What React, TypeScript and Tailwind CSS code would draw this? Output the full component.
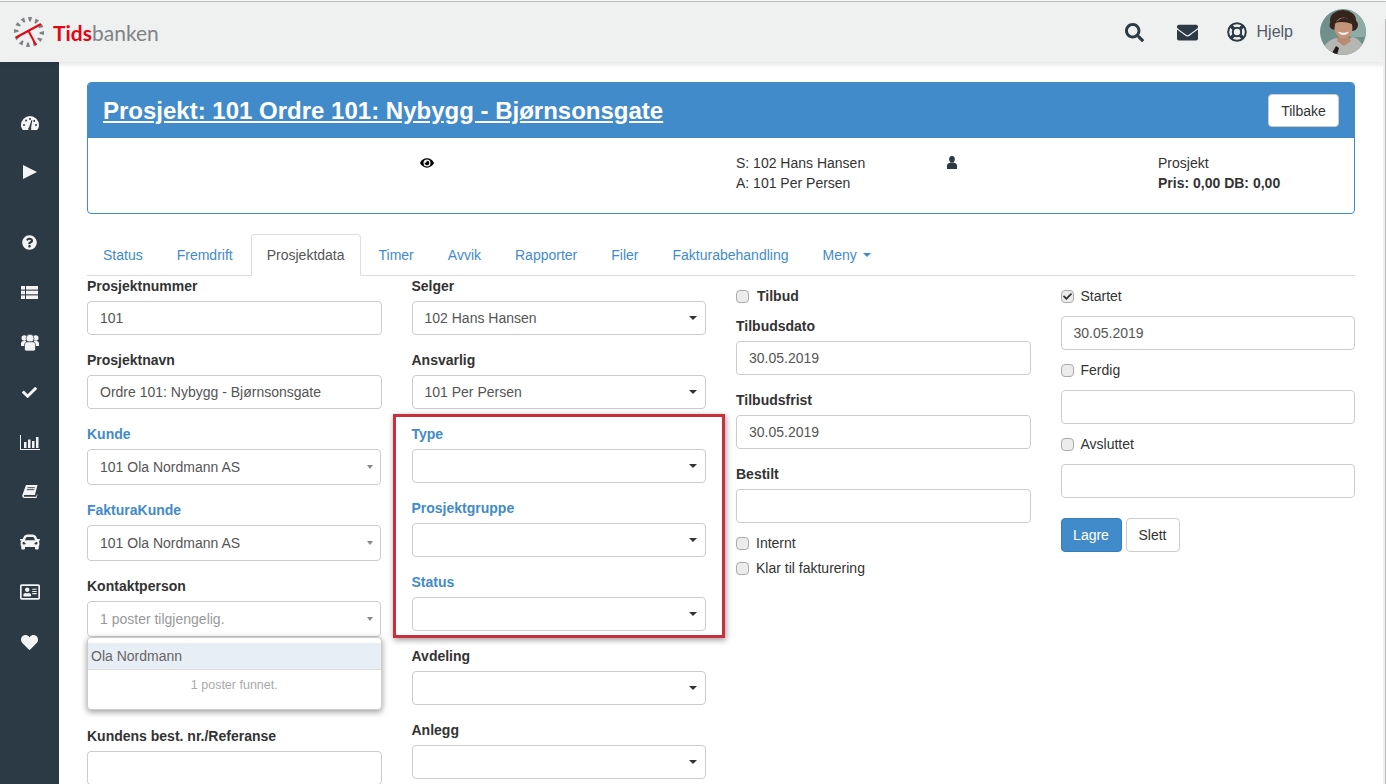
import type { ReactNode } from "react";
import {
  FaCar,
  FaCheck,
  FaEnvelope,
  FaEye,
  FaHeart,
  FaQuestionCircle,
  FaRegAddressCard,
  FaSearch,
} from "react-icons/fa";

const Logo = () => {
  const ticks = [0, 30, 60, 90, 120, 150, 180, 210, 240, 270, 300, 330];
  return (
    <svg width="32" height="32" viewBox="0 0 32 32" className="shrink-0">
      {ticks.map((a) => (
        <path key={a} d="M14 1h4l-1.2 4.5h-1.6z" fill="#808285" transform={`rotate(${a} 15 16)`} />
      ))}
      <path d="M2 21.5 27 8" stroke="#e30613" strokeWidth="2" />
      <path d="M14.5 15 22 29" stroke="#e30613" strokeWidth="2" />
    </svg>
  );
};

const Avatar = () => (
  <svg width="46" height="46" viewBox="0 0 46 46" className="rounded-full">
    <rect width="46" height="46" fill="#6f8f8b" />
    <rect x="30" width="16" height="28" fill="#8fabA6" />
    <path d="M2 46c0-9 6-15 14-17l8 3 9-4c7 2 11 8 12 18z" fill="#b5b5b2" />
    <path d="M11 46l5-9 3 2-2 7z" fill="#1f1b1c" />
    <ellipse cx="23" cy="11" rx="13" ry="10" fill="#35231d" />
    <circle cx="32" cy="16" r="6" fill="#35231d" />
    <circle cx="14" cy="16" r="4.500" fill="#35231d" />
    <path d="M19 27h9l3 5-7 5-7-5z" fill="#b98a72" />
    <ellipse cx="23.500" cy="19" rx="9" ry="10.500" fill="#c49479" />
    <path d="M15 14c3-3 6-5 9-5 4 0 7 2 8 6-5-2-11-3-17-1z" fill="#35231d" />
    <path d="M18 22.500c3 1.500 8 1.500 11 0-1 4.500-10 4.500-11 0z" fill="#f5ece7" />
  </svg>
);

const LifeRing = () => (
  <svg width="20" height="20" viewBox="0 0 20 20" fill="none" stroke="#2c3a45">
    <circle cx="10" cy="10" r="8.800" strokeWidth="2" />
    <circle cx="10" cy="10" r="4.200" strokeWidth="2" />
    <path d="M3.800 3.800 7 7M16.200 3.800 13 7M3.800 16.200 7 13M16.200 16.200 13 13" strokeWidth="3.400" />
  </svg>
);

const Gauge = () => (
  <svg width="18" height="14" viewBox="0 0 18 14">
    <path d="M2 14C.7 12.600 0 10.900 0 9a9 9 0 0 1 18 0c0 1.900-.7 3.600-2 5z" fill="#f4f4f4" />
    <g fill="#2c3a45">
      <circle cx="3" cy="9" r="1" />
      <circle cx="5" cy="4.500" r="1" />
      <circle cx="9" cy="3" r="1" />
      <circle cx="15" cy="9" r="1" />
      <circle cx="13.200" cy="5" r="1" />
      <path d="M8 11.500 10.500 4l.8.3L10 12a1.500 1.500 0 1 1-2-.5z" />
    </g>
  </svg>
);

const Play = () => (
  <svg width="14" height="14" viewBox="0 0 14 14" fill="#f4f4f4">
    <path d="M0 0 14 7 0 14z" />
  </svg>
);

const ThList = () => (
  <svg width="17" height="13" viewBox="0 0 17 13" fill="#f4f4f4">
    {[0, 4.700, 9.400].map((y) => (
      <g key={y}>
        <rect y={y} width="4" height="3.600" />
        <rect x="5" y={y} width="12" height="3.600" />
      </g>
    ))}
  </svg>
);

const Users = () => (
  <svg width="18" height="17" viewBox="0 0 18 17" fill="#f4f4f4">
    <circle cx="3.300" cy="4" r="2.800" />
    <circle cx="14.700" cy="4" r="2.800" />
    <path d="M0 12V9.500C0 8 1 7 2.500 7H5v5zM18 12V9.500C18 8 17 7 15.500 7H13v5z" />
    <circle cx="9" cy="4.300" r="4" stroke="#2c3a45" strokeWidth="0.7" />
    <path d="M3.500 15V11c0-2 1.500-3.200 3-3.200h5c1.500 0 3 1.200 3 3.200v4c0 1-.8 2-2 2h-7c-1.200 0-2-1-2-2z" stroke="#2c3a45" strokeWidth="0.7" />
  </svg>
);

const Bars = () => (
  <svg width="20" height="15" viewBox="0 0 20 15" fill="#f4f4f4">
    <rect width="1" height="15" />
    <rect y="14" width="20" height="1" />
    <rect x="4" y="7" width="2.500" height="6" />
    <rect x="8" y="4.500" width="2.500" height="8.500" />
    <rect x="12" y="6" width="2.500" height="7" />
    <rect x="16" y="2" width="2.500" height="11" />
  </svg>
);

const BookIcon = () => (
  <svg width="16" height="14" viewBox="0 0 16 14" fill="#f4f4f4">
    <path d="M4 0h11.500l-2.600 10H2.800c-.6 0-1 .4-.9.9.1.500.5.9 1.100.9h11.200l.7-2.600.6.500-1 3.300H2.600C1 13 0 11.700.3 10.300z" />
    <path d="M5.500 2.700h7.300M5 4.700h7.300" stroke="#2c3a45" strokeWidth="0.9" />
  </svg>
);

const Bust = () => (
  <svg width="10" height="13" viewBox="0 0 10 13" fill="#2c3a45">
    <ellipse cx="5" cy="3.200" rx="2.800" ry="3.200" />
    <path d="M0 13V9.500C0 7.800 1.500 7 3.500 6.500h3C8.500 7 10 7.800 10 9.500V13z" />
  </svg>
);

const Caret = () => <span className="h-0 w-0 border-x-4 border-t-4 border-x-transparent border-t-[#333]" />;

const MutedCaret = () => <span className="h-0 w-0 border-x-[3px] border-t-4 border-x-transparent border-t-[#888]" />;

const Label = ({ children, blue }: { children: ReactNode; blue?: boolean }) => (
  <label className={`mb-[5px] block h-5 text-sm font-bold leading-5 ${blue ? "text-[#428bca]" : "text-[#333]"}`}>
    {children}
  </label>
);

const Input = ({ value = "" }: { value?: string }) => (
  <input
    readOnly
    value={value}
    className="block h-[34px] w-full rounded border border-[#ccc] bg-white px-3 text-sm text-[#555] outline-none"
  />
);

const Select = ({ value = "" }: { value?: string }) => (
  <div className="flex h-[34px] w-full items-center justify-between rounded border border-[#ccc] bg-white pl-3 pr-2 text-sm text-[#555]">
    <span>{value}</span>
    <Caret />
  </div>
);

const Combo = ({ value, placeholder }: { value?: string; placeholder?: string }) => (
  <div className="mr-px flex h-[36px] items-center justify-between rounded border border-[#ccc] bg-white pl-3 pr-[7px] text-sm">
    <span className={placeholder ? "text-[#999]" : "text-[#555]"}>{value ?? placeholder}</span>
    <MutedCaret />
  </div>
);

const Group = ({ label, blue, children }: { label: string; blue?: boolean; children: ReactNode }) => (
  <div className="mb-[15px]">
    <Label blue={blue}>{label}</Label>
    {children}
  </div>
);

const Check = ({ label, checked, bold }: { label: string; checked?: boolean; bold?: boolean }) => (
  <div className={`flex h-5 items-center text-sm text-[#333] ${bold ? "font-bold" : ""}`}>
    <span className="flex h-[13px] w-[13px] items-center justify-center rounded-sm border border-[#aaa] bg-[#ececec]">
      {checked && <FaCheck className="text-[9px] text-[#333]" />}
    </span>
    <span className={bold ? "ml-2" : "ml-[7px]"}>{label}</span>
  </div>
);

const tabs = ["Status", "Fremdrift", "Prosjektdata", "Timer", "Avvik", "Rapporter", "Filer", "Fakturabehandling"];

const sideRest = [
  <FaQuestionCircle key="a" className="text-[15px]" />,
  <ThList key="b" />,
  <Users key="c" />,
  <FaCheck key="d" className="text-[15px]" />,
  <Bars key="e" />,
  <BookIcon key="f" />,
  <FaCar key="g" className="text-[20px]" />,
  <FaRegAddressCard key="h" className="text-[20px]" />,
  <FaHeart key="i" className="text-[17px]" />,
];

export default function App() {
  return (
    <div className="relative flex h-[784px] w-[1386px] flex-col overflow-hidden bg-white font-['Liberation_Sans',Arial,sans-serif] text-sm text-[#333]">
      <header className="relative z-10 mt-px flex h-[61px] shrink-0 items-center border-t border-[#bbb] bg-[#eff1f1] shadow-[0_2px_6px_rgba(0,0,0,0.12)]">
        <div className="ml-[14px] flex items-center">
          <Logo />
          <span className="ml-[7px] font-['Lato',sans-serif] text-[21px] leading-none">
            <span className="font-bold text-[#e30613]">Tids</span>
            <span className="text-[#808285]">banken</span>
          </span>
        </div>
        <div className="ml-auto flex items-center text-[#2c3a45]">
          <FaSearch className="text-[19px]" />
          <FaEnvelope className="ml-[33px] text-[21px]" />
          <span className="ml-[29px]">
            <LifeRing />
          </span>
          <span className="ml-[10px] text-base text-[#4f5b66]">Hjelp</span>
          <span className="ml-[27px] mr-5 flex">
            <Avatar />
          </span>
        </div>
      </header>

      <div className="flex min-h-0 flex-1">
        <aside className="flex w-[59px] shrink-0 flex-col bg-[#2c3a45] pt-9 text-[#f4f4f4]">
          <div className="flex h-[49px] items-center justify-center pt-px">
            <Gauge />
          </div>
          <div className="flex h-[50px] items-center justify-center">
            <Play />
          </div>
          <div className="mt-5">
            {sideRest.map((icon, i) => (
              <div key={i} className="flex h-[50px] items-center justify-center">
                {icon}
              </div>
            ))}
          </div>
        </aside>

        <main className="min-w-0 flex-1 pl-7 pr-[31px] pt-5">
          <section className="h-[132px] overflow-hidden rounded border border-[#428bca]">
            <div className="flex h-[55px] items-center justify-between bg-[#428bca] px-[15px]">
              <h1 className="text-2xl font-bold text-white underline">
                Prosjekt: 101 Ordre 101: Nybygg - Bjørnsonsgate
              </h1>
              <button className="h-[33px] w-[71px] rounded border border-[#ccc] bg-white text-sm text-[#333]">
                Tilbake
              </button>
            </div>
            <div className="flex pl-[332px] pt-[15px] leading-5">
              <div className="w-[316px] pt-[3px] text-[14px] text-black">
                <FaEye />
              </div>
              <div className="w-[211px]">
                <div>S: 102 Hans Hansen</div>
                <div>A: 101 Per Persen</div>
              </div>
              <div className="w-[211px] pt-[3px]">
                <Bust />
              </div>
              <div>
                <div>Prosjekt</div>
                <div className="font-bold">Pris: 0,00 DB: 0,00</div>
              </div>
            </div>
          </section>

          <nav className="mt-5 flex h-[42px] border-b border-[#ddd] text-sm leading-5">
            {tabs.map((t) => (
              <a
                key={t}
                className={
                  t === "Prosjektdata"
                    ? "mr-0.5 h-[42px] rounded-t border border-[#ddd] border-b-white bg-white px-[15px] py-[10px] text-[#555]"
                    : "mr-0.5 h-[41px] border border-transparent px-[15px] py-[10px] text-[#428bca]"
                }
              >
                {t}
              </a>
            ))}
            <a className="flex h-[41px] items-center gap-[6px] border border-transparent px-[15px] text-[#428bca]">
              Meny
              <span className="h-0 w-0 border-x-4 border-t-4 border-x-transparent border-t-[#428bca]" />
            </a>
          </nav>

          <div className="relative grid grid-cols-4 gap-x-[30px]">
            <div>
              <Group label="Prosjektnummer">
                <Input value="101" />
              </Group>
              <Group label="Prosjektnavn">
                <Input value="Ordre 101: Nybygg - Bjørnsonsgate" />
              </Group>
              <Group label="Kunde" blue>
                <Combo value="101 Ola Nordmann AS" />
              </Group>
              <Group label="FakturaKunde" blue>
                <Combo value="101 Ola Nordmann AS" />
              </Group>
              <div className="relative mb-[15px]">
                <Label>Kontaktperson</Label>
                <Combo placeholder="1 poster tilgjengelig." />
                <div className="absolute left-0 top-[61px] z-10 h-[73px] w-full rounded border border-[#ccc] bg-white pt-[5px] shadow-[0_2px_6px_rgba(0,0,0,0.4)]">
                  <div className="flex h-[27px] items-center border-b border-[#ddd] bg-[#e8eef6] pl-[3px] text-sm text-[#666]">
                    Ola Nordmann
                  </div>
                  <div className="mt-[5px] text-center text-[12.5px] leading-5 text-[#aaa]">1 poster funnet.</div>
                </div>
              </div>
              <div className="h-[74px]" />
              <Group label="Kundens best. nr./Referanse">
                <Input />
              </Group>
            </div>

            <div>
              <Group label="Selger">
                <Select value="102 Hans Hansen" />
              </Group>
              <Group label="Ansvarlig">
                <Select value="101 Per Persen" />
              </Group>
              <Group label="Type" blue>
                <Select />
              </Group>
              <Group label="Prosjektgruppe" blue>
                <Select />
              </Group>
              <Group label="Status" blue>
                <Select />
              </Group>
              <Group label="Avdeling">
                <Select />
              </Group>
              <Group label="Anlegg">
                <Select />
              </Group>
            </div>

            <div className="pt-[10px]">
              <div className="mb-[10px]">
                <Check label="Tilbud" bold />
              </div>
              <Group label="Tilbudsdato">
                <Input value="30.05.2019" />
              </Group>
              <Group label="Tilbudsfrist">
                <Input value="30.05.2019" />
              </Group>
              <Group label="Bestilt">
                <Input />
              </Group>
              <div className="-mt-[5px] mb-[5px]">
                <Check label="Internt" />
              </div>
              <Check label="Klar til fakturering" />
            </div>

            <div className="pt-[10px]">
              <div className="flex flex-col gap-[10px]">
                <Check label="Startet" checked />
                <Input value="30.05.2019" />
                <Check label="Ferdig" />
                <Input />
                <Check label="Avsluttet" />
                <Input />
              </div>
              <div className="mt-5 flex gap-1">
                <button className="h-[34px] w-[61px] rounded border border-[#357ebd] bg-[#428bca] text-sm text-white">
                  Lagre
                </button>
                <button className="h-[34px] w-[54px] rounded border border-[#ccc] bg-white text-sm text-[#333]">
                  Slett
                </button>
              </div>
            </div>

            {/* red highlight drawn on top of the screenshot */}
            <div className="pointer-events-none absolute left-[306px] top-[138px] h-[224px] w-[332px] border-[3px] border-[#c9303c] shadow-[1px_2px_6px_rgba(0,0,0,0.4)]" />
          </div>
        </main>
      </div>

      {/* edge of the captured browser window */}
      <div className="absolute bottom-0 right-0 top-[19px] z-20 w-[3px] border-r border-[#bbb] bg-[#eeeeee]" />
    </div>
  );
}
